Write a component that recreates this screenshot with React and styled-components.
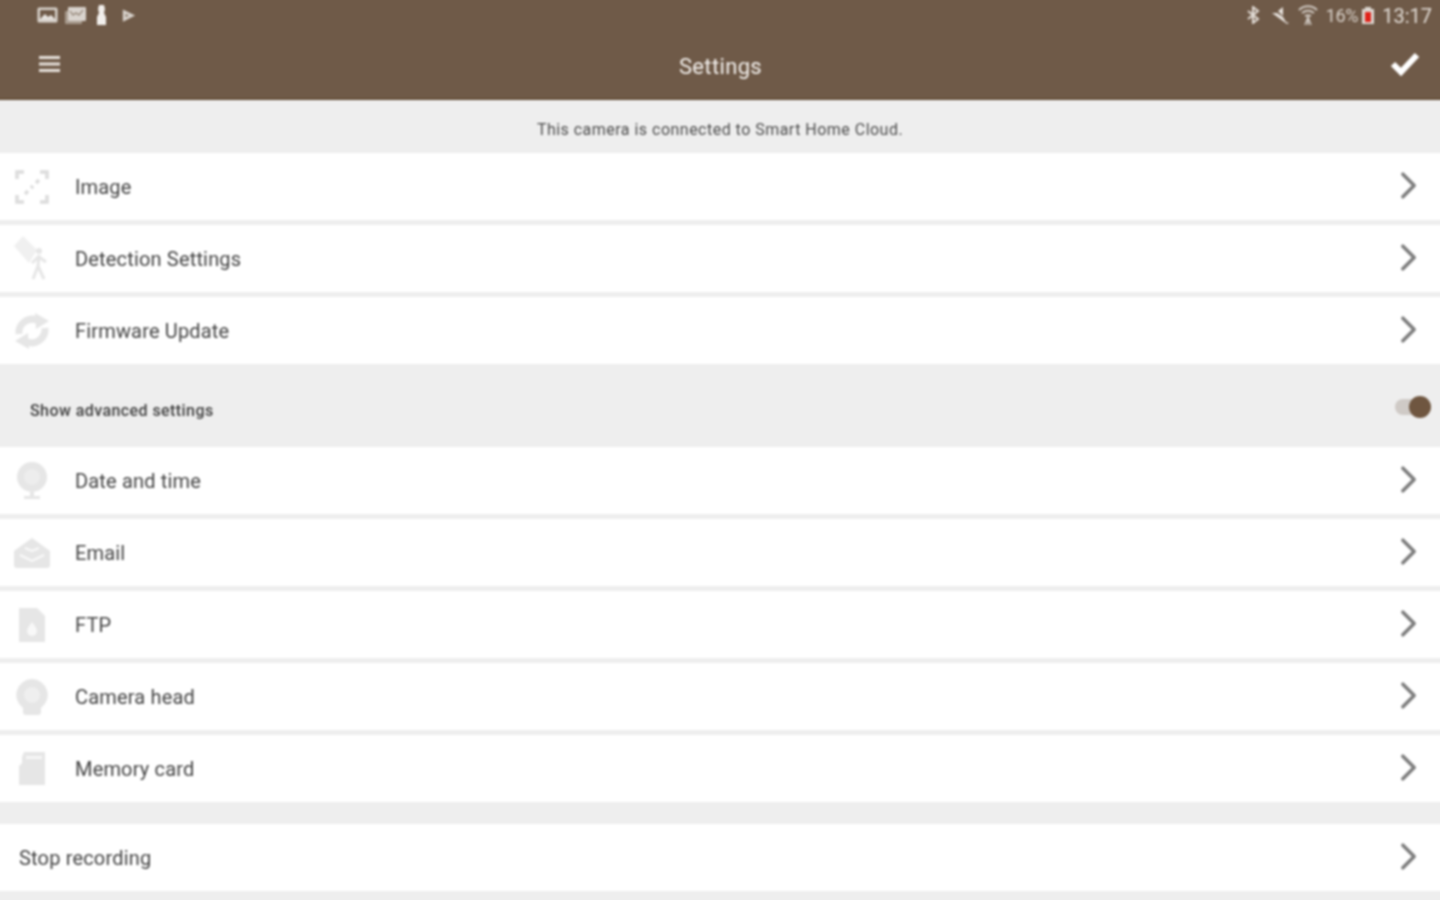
import React from "react";
import styled, { createGlobalStyle } from "styled-components";
import { LuChevronRight } from "react-icons/lu";

const GlobalStyle = createGlobalStyle`
  html, body {
    margin: 0;
    padding: 0;
    height: 900px;
    overflow: hidden;
    background: #eeeeee;
    font-family: Roboto, "Liberation Sans", sans-serif;
  }
`;

/* 4px bleed on every side so the soft filter doesn't fade at the window edge */
const Page = styled.div`
  width: 1448px;
  height: 908px;
  margin: -4px;
  overflow: hidden;
  background: #eeeeee;
  display: flex;
  flex-direction: column;
  filter: blur(0.8px);
`;

const Header = styled.header`
  height: 98px;
  padding-top: 4px;
  flex-shrink: 0;
  background: #6f5a48;
  border-bottom: 2px solid #65503a;
  display: flex;
  flex-direction: column;
`;

const StatusBar = styled.div`
  height: 30px;
  padding: 0 12px 0 41px;
  display: flex;
  align-items: center;
  justify-content: space-between;
`;

const StatusGroup = styled.div`
  display: flex;
  align-items: center;
  gap: ${(props) => props.gap || 6}px;
`;

const StatusIcon = styled.svg`
  margin-left: ${(props) => props.$left || 0}px;
  margin-right: ${(props) => props.$right || 0}px;
`;

const BatteryText = styled.span`
  font-size: 18px;
  letter-spacing: -0.3px;
  color: #d9d2cb;
`;

const Clock = styled.span`
  font-size: 20px;
  margin-top: 2px;
  color: #e2dcd6;
`;

const Toolbar = styled.div`
  height: 68px;
  padding: 0 24px 1px;
  box-sizing: border-box;
  display: grid;
  grid-template-columns: 1fr auto 1fr;
  align-items: center;
`;

const Title = styled.h1`
  margin: 6px 0 0 1px;
  font-size: 22px;
  font-weight: 400;
  letter-spacing: 0.35px;
  color: #f4f1ee;
`;

const MenuIcon = styled.svg`
  margin-left: 19px;
`;

const CheckMark = styled.svg`
  justify-self: end;
`;

const Notice = styled.div`
  height: 53px;
  flex-shrink: 0;
  padding-top: 6px;
  box-sizing: border-box;
  display: flex;
  align-items: center;
  justify-content: center;
  font-size: 16px;
  letter-spacing: 0.48px;
  color: #4c4c4c;
`;

const List = styled.div`
  display: flex;
  flex-direction: column;
  gap: 5px;
`;

const Row = styled.div`
  height: 67px;
  flex-shrink: 0;
  background: #ffffff;
  display: flex;
  align-items: center;
  padding: 0 23px 0 ${(props) => (props.$plain ? 23 : 17)}px;
  color: #444444;
  font-size: 20px;
  letter-spacing: 0.17px;
`;

const RowIcon = styled.div`
  width: 38px;
  height: 38px;
  margin-right: 24px;
  flex-shrink: 0;
  display: flex;
  align-items: center;
  justify-content: center;
`;

const RowLabel = styled.span`
  flex: 1;
`;

const Chevron = styled(LuChevronRight)`
  width: 45px;
  height: 45px;
  margin-right: -9.5px;
  margin-top: -3px;
  color: #7c7c7c;
  stroke-width: 1.9;
`;

const AdvancedBar = styled.div`
  height: 83px;
  flex-shrink: 0;
  display: flex;
  align-items: center;
  justify-content: space-between;
  padding: 10px 13px 0 34px;
  box-sizing: border-box;
  font-size: 16px;
  font-weight: 500;
  letter-spacing: 0.43px;
  color: #3e3e3e;
`;

const Switch = styled.div`
  position: relative;
  width: 36px;
  height: 16px;
  margin-top: -8px;
  border-radius: 8px;
  background: #cfcac6;
`;

const SwitchKnob = styled.div`
  position: absolute;
  right: 0;
  top: -3px;
  width: 22px;
  height: 22px;
  border-radius: 50%;
  background: #6f5640;
`;

const Spacer = styled.div`
  height: 22px;
  flex-shrink: 0;
`;

const GREY = "#e6e6e6";

const ExpandIcon = () => (
  <svg width="36" height="36" viewBox="0 0 36 36" fill="none" stroke="#dcdcdc" strokeWidth="3.5">
    <path d="M3 10V3h7M26 3h7v7M33 26v7h-7M10 33H3v-7" />
    <path d="M11 25l3-3M17 19l2-2M22 14l3-3" />
  </svg>
);

const WalkerIcon = () => (
  <svg width="38" height="46" viewBox="0 0 38 46" fill="none">
    <path d="M1 10l9-10 14 14-8 13z" fill="#f0f0f0" />
    <circle cx="26" cy="15" r="3" fill={GREY} />
    <path
      d="M26 19l-1 11-5 13M25 30l6 13M25 21l-6 6M26 21l7 5"
      stroke={GREY}
      strokeWidth="3"
    />
  </svg>
);

const SyncIcon = () => (
  <svg width="38" height="36" viewBox="0 0 38 36" fill="none" stroke={GREY} strokeWidth="7">
    <path d="M6 21A13.5 13.5 0 0 1 24 7" />
    <path d="M32 15a13.5 13.5 0 0 1-18 14" />
    <path d="M22 0l14 8-13 8z" fill={GREY} stroke="none" />
    <path d="M16 36L2 28l13-8z" fill={GREY} stroke="none" />
  </svg>
);

const GlobeIcon = () => (
  <svg width="34" height="38" viewBox="0 0 34 38">
    <circle cx="17" cy="15" r="15" fill={GREY} />
    <circle cx="17" cy="15" r="8" fill="#ededed" />
    <path d="M15 30h4v4h-4zM9 34h16v3H9z" fill={GREY} />
  </svg>
);

const MailIcon = () => (
  <svg width="38" height="32" viewBox="0 0 38 32">
    <path d="M1 14L19 1l18 13v14a3 3 0 0 1-3 3H4a3 3 0 0 1-3-3z" fill={GREY} />
    <path d="M7 18l12 6 12-6M12 11l7 3 7-3" fill="none" stroke="#fafafa" strokeWidth="2" />
  </svg>
);

const FileIcon = () => (
  <svg width="30" height="34" viewBox="0 0 30 34">
    <path d="M2 0h18l8 8v26H2z" fill={GREY} />
    <path d="M15 14c3 4 5 6 5 9a5 5 0 0 1-10 0c0-3 2-5 5-9z" fill="#f8f8f8" />
  </svg>
);

const CameraHeadIcon = () => (
  <svg width="34" height="38" viewBox="0 0 34 38">
    <path d="M17 1a16 16 0 0 1 9 29v4a3 3 0 0 1-3 3H11a3 3 0 0 1-3-3v-4A16 16 0 0 1 17 1z" fill={GREY} />
    <circle cx="17" cy="17" r="8" fill="#efefef" />
  </svg>
);

const CardIcon = () => (
  <svg width="28" height="34" viewBox="0 0 28 34" fill={GREY}>
    <path d="M6 0h21v33H1V14l3-3V5z" />
    <path d="M8 4h16v3H8z" fill="#f6f6f6" />
  </svg>
);

const rows = [
  { label: "Image", icon: <ExpandIcon /> },
  { label: "Detection Settings", icon: <WalkerIcon /> },
  { label: "Firmware Update", icon: <SyncIcon /> },
];

const advancedRows = [
  { label: "Date and time", icon: <GlobeIcon /> },
  { label: "Email", icon: <MailIcon /> },
  { label: "FTP", icon: <FileIcon /> },
  { label: "Camera head", icon: <CameraHeadIcon /> },
  { label: "Memory card", icon: <CardIcon /> },
];

const SettingRow = ({ label, icon }) => (
  <Row>
    <RowIcon>{icon}</RowIcon>
    <RowLabel>{label}</RowLabel>
    <Chevron />
  </Row>
);

const App = () => {
  return (
    <Page>
      <GlobalStyle />
      <Header>
        <StatusBar>
          <StatusGroup gap={7}>
            <svg width="21" height="16" viewBox="0 0 21 16">
              <rect x="0.5" y="0.5" width="20" height="15" rx="1.5" fill="#d9d3cd" />
              <rect x="3" y="3" width="15" height="9" fill="#6f5a48" />
              <path d="M3 12l5-5 3 3 3-2 4 4z" fill="#e8e4e0" />
            </svg>
            <svg width="21" height="17" viewBox="0 0 21 17">
              <rect x="0" y="4" width="17" height="13" rx="1" fill="#a89b8e" />
              <rect x="3" y="0" width="18" height="14" rx="1" fill="#d9d3cd" />
              <path d="M5 4l3 4 3-2 3 2 4-5" fill="none" stroke="#8a7a6b" strokeWidth="1.2" />
            </svg>
            <StatusIcon $left={2} width="13" height="20" viewBox="0 0 13 20" fill="#f2efec">
              <path d="M4 0h5l1 4-1 4 2 4v8H2v-8l2-4-1-4z" />
            </StatusIcon>
            <StatusIcon $left={7} width="14" height="13" viewBox="0 0 16 14">
              <path d="M1 0l14 7-14 7z" fill="#d9d3cd" />
              <path d="M4 5l4 2-4 2z" fill="#8a7a6b" />
            </StatusIcon>
          </StatusGroup>
          <StatusGroup gap={8}>
            <StatusIcon $right={4} width="14" height="18" viewBox="0 0 14 18" fill="none" stroke="#e2dcd6" strokeWidth="2">
              <path d="M2 5l10 8-5 4V1l5 4-10 8" />
            </StatusIcon>
            <svg width="18" height="18" viewBox="0 0 18 18" fill="#e8e3de">
              <path d="M1 7h4l6 4 3 5 3 1-2 1-15-11z" />
              <path d="M6 5l5-4v9z" />
            </svg>
            <svg width="20" height="20" viewBox="0 0 20 20" fill="none" stroke="#cfc8c1" strokeWidth="2">
              <path d="M1 5c5-5 13-5 18 0M4 8c4-3 8-3 12 0M7 11c2-1 4-1 6 0" />
              <path d="M10 11v9M7 20l3-8 3 8" strokeWidth="1.5" />
            </svg>
            <StatusGroup gap={4}>
              <BatteryText>16%</BatteryText>
              <svg width="12" height="18" viewBox="0 0 12 18">
                <path d="M3 1h6v2h3v15H0V3h3z" fill="#dcd6d0" />
                <path d="M3 6h6v10H3z" fill="#e0231a" />
              </svg>
            </StatusGroup>
            <Clock>13:17</Clock>
          </StatusGroup>
        </StatusBar>
        <Toolbar>
          <MenuIcon width="21" height="18" viewBox="0 0 21 18" fill="#e6e0da">
            <rect y="1" width="21" height="3" />
            <rect y="7.5" width="21" height="3" />
            <rect y="14" width="21" height="3" />
          </MenuIcon>
          <Title>Settings</Title>
          <CheckMark width="30" height="24" viewBox="0 0 30 24" fill="none" stroke="#ffffff" strokeWidth="6">
            <path d="M3 12l8 8L27 3" />
          </CheckMark>
        </Toolbar>
      </Header>
      <Notice>This camera is connected to Smart Home Cloud.</Notice>
      <List>
        {rows.map((row) => (
          <SettingRow key={row.label} {...row} />
        ))}
      </List>
      <AdvancedBar>
        Show advanced settings
        <Switch>
          <SwitchKnob />
        </Switch>
      </AdvancedBar>
      <List>
        {advancedRows.map((row) => (
          <SettingRow key={row.label} {...row} />
        ))}
      </List>
      <Spacer />
      <Row $plain>
        <RowLabel>Stop recording</RowLabel>
        <Chevron />
      </Row>
    </Page>
  );
};

export default App;
